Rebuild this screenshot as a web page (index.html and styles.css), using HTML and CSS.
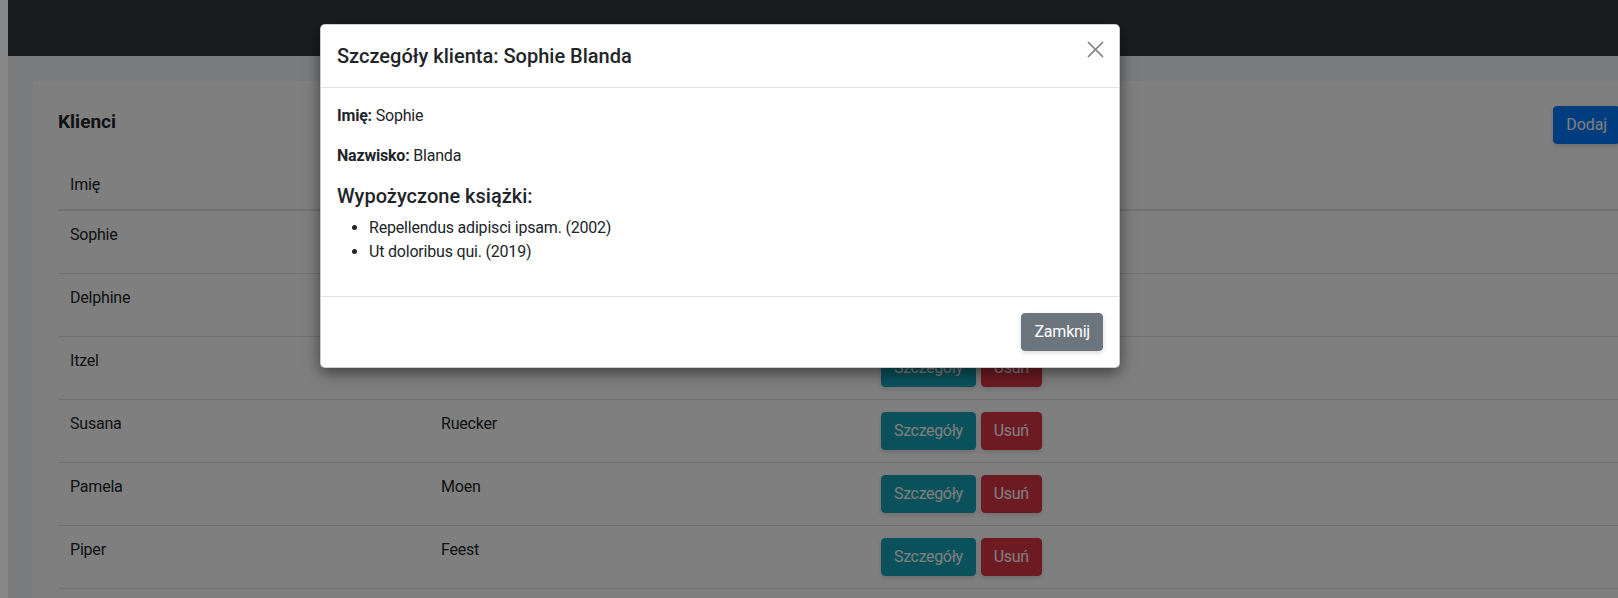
FILE: index.html
```html
<!DOCTYPE html>
<html lang="pl">
<head>
<meta charset="utf-8">
<title>Klienci</title>
<link rel="stylesheet" href="styles.css">
</head>
<body>
<div class="app">
  <nav class="navbar"></nav>
  <main class="main">
    <section class="card">
      <div class="card-head">
        <h2 class="card-title">Klienci</h2>
        <button class="btn btn-primary" type="button">Dodaj</button>
      </div>
      <table class="table">
        <colgroup><col class="col-first"><col class="col-last"><col></colgroup>
        <thead>
          <tr><th>Imię</th><th>Nazwisko</th><th>Akcje</th></tr>
        </thead>
        <tbody>
          <tr><td>Sophie</td><td>Blanda</td><td><div class="actions"><button class="btn btn-info" type="button">Szczegóły</button><button class="btn btn-danger" type="button">Usuń</button></div></td></tr>
          <tr><td>Delphine</td><td>Kuhn</td><td><div class="actions"><button class="btn btn-info" type="button">Szczegóły</button><button class="btn btn-danger" type="button">Usuń</button></div></td></tr>
          <tr><td>Itzel</td><td>Hessel</td><td><div class="actions"><button class="btn btn-info" type="button">Szczegóły</button><button class="btn btn-danger" type="button">Usuń</button></div></td></tr>
          <tr><td>Susana</td><td>Ruecker</td><td><div class="actions"><button class="btn btn-info" type="button">Szczegóły</button><button class="btn btn-danger" type="button">Usuń</button></div></td></tr>
          <tr><td>Pamela</td><td>Moen</td><td><div class="actions"><button class="btn btn-info" type="button">Szczegóły</button><button class="btn btn-danger" type="button">Usuń</button></div></td></tr>
          <tr><td>Piper</td><td>Feest</td><td><div class="actions"><button class="btn btn-info" type="button">Szczegóły</button><button class="btn btn-danger" type="button">Usuń</button></div></td></tr>
        </tbody>
      </table>
    </section>
  </main>

  <div class="backdrop"></div>

  <div class="modal" role="dialog" aria-modal="true">
    <div class="modal-header">
      <h5 class="modal-title">Szczegóły klienta: Sophie Blanda</h5>
      <button class="btn-close" type="button" aria-label="Zamknij">
        <svg width="17" height="17" viewBox="0 0 17 17"><path d="M1 1L16 16M16 1L1 16" stroke="currentColor" stroke-width="1.7" fill="none"/></svg>
      </button>
    </div>
    <div class="modal-body">
      <p><strong>Imię:</strong> Sophie</p>
      <p><strong>Nazwisko:</strong> Blanda</p>
      <h5 class="books-title">Wypożyczone książki:</h5>
      <ul class="books">
        <li>Repellendus adipisci ipsam. (2002)</li>
        <li>Ut doloribus qui. (2019)</li>
      </ul>
    </div>
    <div class="modal-footer">
      <button class="btn btn-secondary" type="button">Zamknij</button>
    </div>
  </div>
</div>
</body>
</html>
```

FILE: styles.css
```css
* { box-sizing: border-box; }

html {
  background: #878787;
}

body {
  margin: 0;
  font-family: Roboto, "Noto Sans", "Liberation Sans", sans-serif;
  font-size: 16px;
  line-height: 1.5;
  letter-spacing: -0.2px;
  color: #212529;
}

.app {
  position: relative;
  margin-left: 8px;
  height: 598px;
  overflow: hidden;
  background: #f4f6fa;
}

.navbar {
  height: 56px;
  background: #343a40;
}

.main {
  padding: 25px 0 0 25px;
}

.card {
  width: 1612px;
  background: #fff;
  padding: 25px;
}

.card-head {
  display: flex;
  justify-content: space-between;
  align-items: flex-start;
  margin-bottom: 17px;
}

.card-title {
  margin: 0;
  font-size: 19px;
  font-weight: 700;
  line-height: 31px;
  letter-spacing: 0;
}

.btn {
  font-family: inherit;
  font-size: 16px;
  line-height: 24px;
  letter-spacing: -0.35px;
  padding: 6px 12px;
  border: 1px solid transparent;
  border-radius: 4px;
  color: #fff;
  cursor: pointer;
  box-shadow: 0 2px 5px rgba(0, 0, 0, 0.15);
}

.btn-primary { background: #007bff; border-color: #007bff; letter-spacing: -0.1px; }
.btn-info { background: #17a2b8; border-color: #17a2b8; }
.btn-danger { background: #dc3545; border-color: #dc3545; }
.btn-secondary { background: #6c757d; border-color: #6c757d; }

.table {
  width: 1562px;
  border-collapse: collapse;
  table-layout: fixed;
}

.col-first { width: 371px; }
.col-last { width: 440px; }

.table th {
  text-align: left;
  font-weight: 400;
  padding: 12px;
  border-bottom: 2px solid #dee2e6;
  vertical-align: bottom;
}

.table td {
  padding: 12px;
  border-bottom: 1px solid #dee2e6;
  vertical-align: top;
}

.actions {
  display: flex;
  gap: 5px;
}

.backdrop {
  position: absolute;
  inset: 0;
  background: rgba(0, 0, 0, 0.5);
}

.modal {
  position: absolute;
  left: 312px;
  top: 24px;
  width: 800px;
  background: #fff;
  border: 1px solid rgba(0, 0, 0, 0.2);
  border-radius: 5px;
  box-shadow: 0 5px 15px rgba(0, 0, 0, 0.5);
}

.modal-header {
  display: flex;
  align-items: flex-start;
  justify-content: space-between;
  padding: 16px;
  border-bottom: 1px solid #dee2e6;
}

.modal-title {
  margin: 0;
  font-size: 20px;
  font-weight: 500;
  line-height: 30px;
  letter-spacing: 0;
}

.btn-close {
  margin: 0 -1px 0 0;
  padding: 0;
  border: 0;
  background: none;
  color: #7f7f7f;
  width: 17px;
  height: 17px;
  cursor: pointer;
}

.btn-close svg { display: block; }

.modal-body {
  padding: 16px;
}

.modal-body p {
  margin: 0 0 16px;
}

.modal-body strong { font-weight: 700; }

.books-title {
  margin: 0 0 8px;
  font-size: 20px;
  font-weight: 500;
  line-height: 24px;
  letter-spacing: 0;
}

.books {
  margin: 0 0 16px;
  padding-left: 32px;
}

.modal-footer {
  display: flex;
  justify-content: flex-end;
  padding: 12px;
  border-top: 1px solid #dee2e6;
}

.modal-footer .btn {
  margin: 4px;
  letter-spacing: -0.2px;
}
```
